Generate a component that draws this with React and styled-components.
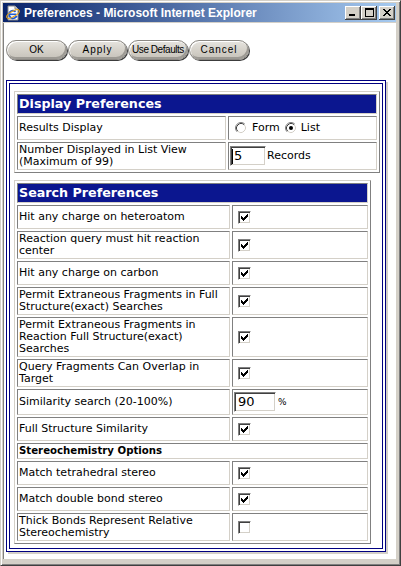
import React from 'react';
import styled, { createGlobalStyle } from 'styled-components';

const GlobalStyle = createGlobalStyle`
  html, body {
    margin: 0;
    padding: 0;
    background: #d4d0c8;
  }
  body {
    font-family: "DejaVu Sans", Verdana, sans-serif;
  }
`;

const Window = styled.div`
  box-sizing: border-box;
  width: 401px;
  height: 566px;
  display: flex;
  flex-direction: column;
  padding: 2px 4px 6px 2px;
  background: #d4d0c8;
  border: 1px solid #404040;
  border-top-color: #d4d0c8;
  border-left-color: #d4d0c8;
  box-shadow: inset 1px 1px 0 #fff, inset -1px -1px 0 #808080;
`;

const TitleBar = styled.div`
  flex: none;
  height: 19px;
  display: flex;
  align-items: center;
  padding: 0 1px 0 2px;
  margin-bottom: 1px;
  background: linear-gradient(to right, #0a246a, #a6caf0);
`;

const TitleText = styled.span`
  margin-left: 3px;
  color: #fff;
  font-family: "Liberation Sans", Arial, sans-serif;
  font-weight: bold;
  font-size: 12px;
  white-space: nowrap;
`;

const CaptionGroup = styled.div`
  margin-left: auto;
  display: flex;
  gap: ${p => p.$gap || 0}px;
`;

const CaptionButton = styled.span`
  box-sizing: border-box;
  width: 16px;
  height: 14px;
  display: flex;
  align-items: center;
  justify-content: center;
  background: #d4d0c8;
  box-shadow: inset -1px -1px 0 #404040, inset 1px 1px 0 #fff, inset -2px -2px 0 #808080;
  svg { display: block; shape-rendering: crispEdges; }
`;

const Client = styled.div`
  flex: 1;
  background: #fff;
  border-left: 1px solid #808080;
  padding: 17px 0 0 2px;
`;

const ButtonBar = styled.div`
  display: flex;
  gap: 1px;
  height: 21px;
`;

const PillButton = styled.button`
  box-sizing: border-box;
  width: ${p => p.$w}px;
  height: 20px;
  padding: 0 0 1px;
  border: 1px solid #8c8984;
  border-radius: 10px;
  background: linear-gradient(#e6e4df, #d4d0c8 55%, #c6c2ba);
  box-shadow: inset 1px 1px 0 #fff, inset -1px -2px 0 #9d9a94, 1px 1px 0 #3c3c3c;
  font-family: "Liberation Sans", Arial, sans-serif;
  font-size: 10px;
  letter-spacing: ${p => p.$ls || 0}px;
  color: #000;
  white-space: nowrap;
`;

const OuterFrame = styled.div`
  box-sizing: border-box;
  width: 380px;
  margin-top: 19px;
  padding: 2px;
  border: 1px solid #000080;
  box-shadow: 2px 2px 0 #d4d0c8;
`;

const InnerFrame = styled.div`
  border: 1px solid #000080;
  padding: 7px 0 4px 4px;
`;

const PrefTable = styled.table`
  box-sizing: border-box;
  width: ${p => p.$width}px;
  margin-bottom: ${p => p.$mb || 0}px;
  table-layout: fixed;
  border-collapse: separate;
  border-spacing: 2px;
  border: 1px solid;
  border-color: #d4d0c8 #808080 #808080 #d4d0c8;
  font-family: "DejaVu Sans", Verdana, sans-serif;
  font-size: 11px;
  line-height: 12px;
  color: #000;
`;

const Col = styled.col`
  width: ${p => p.$w}px;
`;

const Cell = styled.td`
  box-sizing: border-box;
  padding: 1px;
  border: 1px solid;
  border-color: #808080 #d4d0c8 #d4d0c8 #808080;
  vertical-align: middle;
  white-space: nowrap;
  overflow: hidden;
`;

const HeadCell = styled(Cell)`
  background: #0b168f;
  color: #fff;
  font-weight: bold;
  font-size: 12.7px;
  line-height: 16px;
`;

const SectionCell = styled(Cell)`
  font-weight: bold;
  font-size: 10.2px;
`;

const Inline = styled.div`
  height: ${p => p.$h || 20}px;
  display: flex;
  align-items: center;
  padding-left: ${p => p.$pl || 0}px;
`;

const CheckBox = styled.span`
  box-sizing: border-box;
  width: 13px;
  height: 13px;
  display: flex;
  align-items: center;
  justify-content: center;
  background: #fff;
  border: 1px solid;
  border-color: #808080 #fff #fff #808080;
  box-shadow: inset 1px 1px 0 #404040, inset -1px -1px 0 #d4d0c8;
  svg { display: block; shape-rendering: crispEdges; }
`;

const Field = styled.span`
  box-sizing: border-box;
  width: ${p => p.$w}px;
  height: 20px;
  display: flex;
  align-items: center;
  padding-left: ${p => p.$pl}px;
  background: #fff;
  border: 1px solid;
  border-color: #808080 #fff #fff #808080;
  box-shadow: inset 1px 1px 0 #404040, inset -1px -1px 0 #d4d0c8;
  font-family: "DejaVu Sans", Verdana, sans-serif;
  font-size: 13px;
  line-height: 16px;
`;

const Caret = styled.span`
  width: 1px;
  height: 15px;
  margin-right: 1px;
  background: #000;
`;

const Suffix = styled.span`
  margin-left: ${p => p.$ml}px;
  font-size: ${p => p.$fs || 11}px;
`;

const RadioLabel = styled.span`
  margin: 0 ${p => p.$mr}px 0 ${p => p.$ml}px;
`;

const IEIcon = () => (
  <svg width="16" height="16" viewBox="0 0 16 16">
    <path d="M3 1h7l3 3v11H3z" fill="#fff" stroke="#8a8a8a" />
    <path d="M10 1v3h3" fill="#ddd" stroke="#8a8a8a" />
    <circle cx="8" cy="9.5" r="3.8" fill="none" stroke="#1c5ad8" strokeWidth="2" strokeDasharray="19 5" transform="rotate(20 8 9.5)" />
    <path d="M4.5 9.3h7" stroke="#1c5ad8" strokeWidth="1.6" />
    <ellipse cx="8" cy="9" rx="7.2" ry="2.6" fill="none" stroke="#e8a317" strokeWidth="1" transform="rotate(-30 8 9)" />
  </svg>
);

const MinGlyph = () => (
  <svg width="8" height="7"><rect x="0" y="5" width="6" height="2" fill="#000" /></svg>
);

const MaxGlyph = () => (
  <svg width="9" height="9">
    <rect x="0" y="0" width="9" height="2" fill="#000" />
    <rect x="0" y="0" width="1" height="9" fill="#000" />
    <rect x="8" y="0" width="1" height="9" fill="#000" />
    <rect x="0" y="8" width="9" height="1" fill="#000" />
  </svg>
);

const closeRows = [[0, 2, 6, 2], [1, 1, 5, 2], [2, 2, 4, 2], [3, 3, 3, 2]];

const CloseGlyph = () => (
  <svg width="8" height="7">
    <rect x="0" y="0" width="2" height="1" /><rect x="6" y="0" width="2" height="1" />
    <rect x="1" y="1" width="2" height="1" /><rect x="5" y="1" width="2" height="1" />
    <rect x="2" y="2" width="4" height="1" />
    <rect x="3" y="3" width="2" height="1" />
    <rect x="2" y="4" width="4" height="1" />
    <rect x="1" y="5" width="2" height="1" /><rect x="5" y="5" width="2" height="1" />
    <rect x="0" y="6" width="2" height="1" /><rect x="6" y="6" width="2" height="1" />
  </svg>
);

// classic 7x7 check mark, one rect per run of pixels
const checkRuns = [
  [6, 0, 1], [5, 1, 2], [0, 2, 1], [4, 2, 3], [0, 3, 2], [3, 3, 3], [0, 4, 5], [1, 5, 3], [2, 6, 1],
];

const Check = ({ checked }) => (
  <CheckBox>
    {checked && (
      <svg width="7" height="7">
        {checkRuns.map(([x, y, w], i) => (
          <rect key={i} x={x} y={y} width={w} height="1" fill="#000" />
        ))}
      </svg>
    )}
  </CheckBox>
);

const Radio = ({ checked }) => (
  <svg width="12" height="12" viewBox="0 0 12 12" style={{ display: 'block', flex: 'none' }}>
    <circle cx="6" cy="6" r="5.5" fill="#fff" />
    <path d="M2.11 9.89A5.5 5.5 0 0 1 9.89 2.11" fill="none" stroke="#808080" />
    <path d="M9.89 2.11A5.5 5.5 0 0 1 2.11 9.89" fill="none" stroke="#fff" />
    <path d="M2.82 9.18A4.5 4.5 0 0 1 9.18 2.82" fill="none" stroke="#404040" />
    <path d="M9.18 2.82A4.5 4.5 0 0 1 2.82 9.18" fill="none" stroke="#d4d0c8" />
    {checked && <circle cx="6" cy="6" r="2" fill="#000" />}
  </svg>
);

const Lines = ({ lines }) =>
  lines.map((l, i) => (
    <React.Fragment key={i}>
      {i > 0 && <br />}
      {l}
    </React.Fragment>
  ));

const searchRows = [
  { label: ['Hit any charge on heteroatom'], checked: true },
  { label: ['Reaction query must hit reaction', 'center'], checked: true },
  { label: ['Hit any charge on carbon'], checked: true },
  { label: ['Permit Extraneous Fragments in Full', 'Structure(exact) Searches'], checked: true },
  { label: ['Permit Extraneous Fragments in', 'Reaction Full Structure(exact)', 'Searches'], checked: true },
  { label: ['Query Fragments Can Overlap in', 'Target'], checked: true },
  { label: ['Similarity search (20-100%)'], value: '90' },
  { label: ['Full Structure Similarity'], checked: true },
  { section: 'Stereochemistry Options' },
  { label: ['Match tetrahedral stereo'], checked: true },
  { label: ['Match double bond stereo'], checked: true },
  { label: ['Thick Bonds Represent Relative', 'Stereochemistry'], checked: false },
];

const buttons = [
  { text: 'OK', w: 61, ls: 0 },
  { text: 'Apply', w: 59, ls: 1 },
  { text: 'Use Defaults', w: 60, ls: -0.45 },
  { text: 'Cancel', w: 60, ls: 1 },
];

const App = () => {
  return (
    <>
      <GlobalStyle />
      <Window>
        <TitleBar>
          <IEIcon />
          <TitleText>Preferences - Microsoft Internet Explorer</TitleText>
          <CaptionGroup $gap={2}>
            <CaptionGroup>
              <CaptionButton><MinGlyph /></CaptionButton>
              <CaptionButton><MaxGlyph /></CaptionButton>
            </CaptionGroup>
            <CaptionButton><CloseGlyph /></CaptionButton>
          </CaptionGroup>
        </TitleBar>

        <Client>
          <ButtonBar>
            {buttons.map(b => (
              <PillButton key={b.text} $w={b.w} $ls={b.ls}>{b.text}</PillButton>
            ))}
          </ButtonBar>

          <OuterFrame>
            <InnerFrame>
              <PrefTable $width={366} $mb={7}>
                <colgroup>
                  <Col $w={209} />
                  <Col $w={149} />
                </colgroup>
                <tbody>
                  <tr><HeadCell colSpan={2}>Display Preferences</HeadCell></tr>
                  <tr>
                    <Cell>Results Display</Cell>
                    <Cell>
                      <Inline $pl={5}>
                        <Radio />
                        <RadioLabel $ml={5} $mr={5}>Form</RadioLabel>
                        <Radio checked />
                        <RadioLabel $ml={4} $mr={0}>List</RadioLabel>
                      </Inline>
                    </Cell>
                  </tr>
                  <tr>
                    <Cell><Lines lines={['Number Displayed in List View', '(Maximum of 99)']} /></Cell>
                    <Cell>
                      <Inline>
                        <Field $w={36} $pl={1}><Caret />5</Field>
                        <Suffix $ml={1}>Records</Suffix>
                      </Inline>
                    </Cell>
                  </tr>
                </tbody>
              </PrefTable>

              <PrefTable $width={357}>
                <colgroup>
                  <Col $w={213} />
                  <Col $w={136} />
                </colgroup>
                <tbody>
                  <tr><HeadCell colSpan={2}>Search Preferences</HeadCell></tr>
                  {searchRows.map((r, i) =>
                    r.section ? (
                      <tr key={i}><SectionCell colSpan={2}>{r.section}</SectionCell></tr>
                    ) : (
                      <tr key={i}>
                        <Cell><Lines lines={r.label} /></Cell>
                        <Cell>
                          {r.value ? (
                            <Inline $h={22}>
                              <Field $w={42} $pl={3}>{r.value}</Field>
                              <Suffix $ml={2} $fs={9}>%</Suffix>
                            </Inline>
                          ) : (
                            <Inline $pl={4}><Check checked={r.checked} /></Inline>
                          )}
                        </Cell>
                      </tr>
                    )
                  )}
                </tbody>
              </PrefTable>
            </InnerFrame>
          </OuterFrame>
        </Client>
      </Window>
    </>
  );
};

export default App;
